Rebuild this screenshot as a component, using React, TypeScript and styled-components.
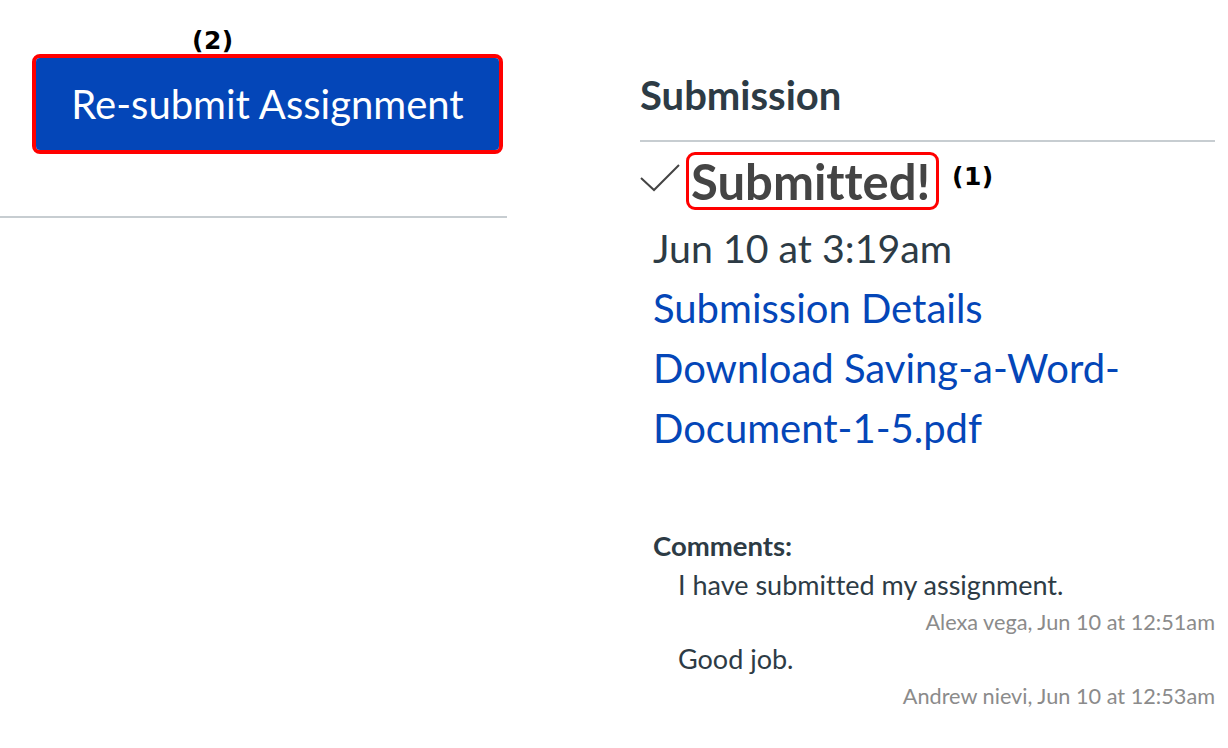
import React from "react";
import styled, { createGlobalStyle } from "styled-components";

const Global = createGlobalStyle`
  html, body { margin: 0; padding: 0; background: #ffffff; }
  body {
    font-family: Lato, "Noto Sans", sans-serif;
    color: #2d3b45;
    font-variant-ligatures: none;
  }
  * { box-sizing: border-box; }
`;

const Page = styled.div`
  width: 1228px;
  height: 748px;
  display: grid;
  grid-template-columns: 507px 575px;
  column-gap: 133px;
  overflow: hidden;
`;

const LeftCol = styled.div`
  display: flex;
  flex-direction: column;
  padding-top: 54px;
`;

const ButtonWrap = styled.div`
  position: relative;
  margin-left: 32px;
  width: 471px;
`;

const Callout = styled.div<{ $radius: number }>`
  border: 4px solid #ff0000;
  border-radius: ${(p) => p.$radius}px;
`;

const ResubmitButton = styled.button`
  display: block;
  width: 100%;
  height: 92px;
  background: #0446b8;
  color: #ffffff;
  border: none;
  border-radius: 4px;
  font-family: Lato, sans-serif;
  font-size: 40px;
  font-variant-ligatures: none;
  padding: 0;
  cursor: pointer;
`;

const Marker = styled.span<{ $top: number; $left: number }>`
  position: absolute;
  top: ${(p) => p.$top}px;
  left: ${(p) => p.$left}px;
  background: #ffffff;
  padding: 0 1px;
  font-family: "DejaVu Sans", Verdana, sans-serif;
  font-weight: bold;
  font-size: 25px;
  letter-spacing: 0.5px;
  line-height: 27px;
  color: #000000;
`;

const Rule = styled.hr`
  border: none;
  height: 2px;
  background: #c7cdd1;
  margin: 0;
`;

const LeftRule = styled(Rule)`
  margin-top: 62px;
`;

const RightCol = styled.div`
  display: flex;
  flex-direction: column;
`;

const Heading = styled.h2`
  margin: 72px 0 0;
  font-size: 40px;
  font-weight: 700;
  line-height: 46px;
  color: #2d3b45;
`;

const HeadRule = styled(Rule)`
  margin-top: 22px;
`;

const StatusRow = styled.div`
  position: relative;
  display: flex;
  align-items: center;
  margin-top: 10px;
  gap: 6px;
`;

const CheckIcon = styled.svg`
  width: 40px;
  height: 30px;
  flex: none;
  margin-top: -6px;
`;

const StatusBox = styled.div`
  border: 3px solid #ff0000;
  border-radius: 9px;
  padding: 0 6px 0 2px;
`;

const StatusText = styled.div`
  font-size: 49px;
  font-weight: 700;
  line-height: 52px;
  color: #444444;
`;

const Details = styled.div`
  padding-left: 13px;
  display: flex;
  flex-direction: column;
  margin-top: 8px;
`;

const DateLine = styled.div`
  font-size: 39.3px;
  line-height: 60px;
  color: #2d3b45;
`;

const LinkLine = styled.a`
  font-size: 40px;
  line-height: 60px;
  color: #0446b8;
  text-decoration: none;
  display: block;
`;

const Comments = styled.div`
  margin-top: 68px;
  padding-left: 13px;
  display: flex;
  flex-direction: column;
`;

const CommentsTitle = styled.div`
  font-size: 27.5px;
  font-weight: 700;
  line-height: 40px;
  color: #2d3b45;
`;

const CommentText = styled.div`
  padding-left: 25px;
  font-size: 27px;
  line-height: 38px;
  color: #2d3b45;
`;

const CommentMeta = styled.div`
  text-align: right;
  font-size: 21.7px;
  line-height: 36px;
  color: #8b8b8b;
`;

export default function App() {
  return (
    <>
      <Global />
      <Page>
        <LeftCol>
          <ButtonWrap>
            <Callout $radius={8}>
              <ResubmitButton>Re-submit Assignment</ResubmitButton>
            </Callout>
            <Marker $top={-27} $left={159}>(2)</Marker>
          </ButtonWrap>
          <LeftRule />
        </LeftCol>
        <RightCol>
          <Heading>Submission</Heading>
          <HeadRule />
          <StatusRow>
            <CheckIcon viewBox="0 0 40 30">
              <path d="M1 15 L14 27 L39 2" fill="none" stroke="#444" strokeWidth="2" />
            </CheckIcon>
            <StatusBox>
              <StatusText>Submitted!</StatusText>
            </StatusBox>
            <Marker $top={11} $left={311}>(1)</Marker>
          </StatusRow>
          <Details>
            <DateLine>Jun 10 at 3:19am</DateLine>
            <LinkLine href="#">Submission Details</LinkLine>
            <LinkLine href="#">Download Saving-a-Word-</LinkLine>
            <LinkLine href="#">Document-1-5.pdf</LinkLine>
          </Details>
          <Comments>
            <CommentsTitle>Comments:</CommentsTitle>
            <CommentText>I have submitted my assignment.</CommentText>
            <CommentMeta>Alexa vega, Jun 10 at 12:51am</CommentMeta>
            <CommentText>Good job.</CommentText>
            <CommentMeta>Andrew nievi, Jun 10 at 12:53am</CommentMeta>
          </Comments>
        </RightCol>
      </Page>
    </>
  );
}
